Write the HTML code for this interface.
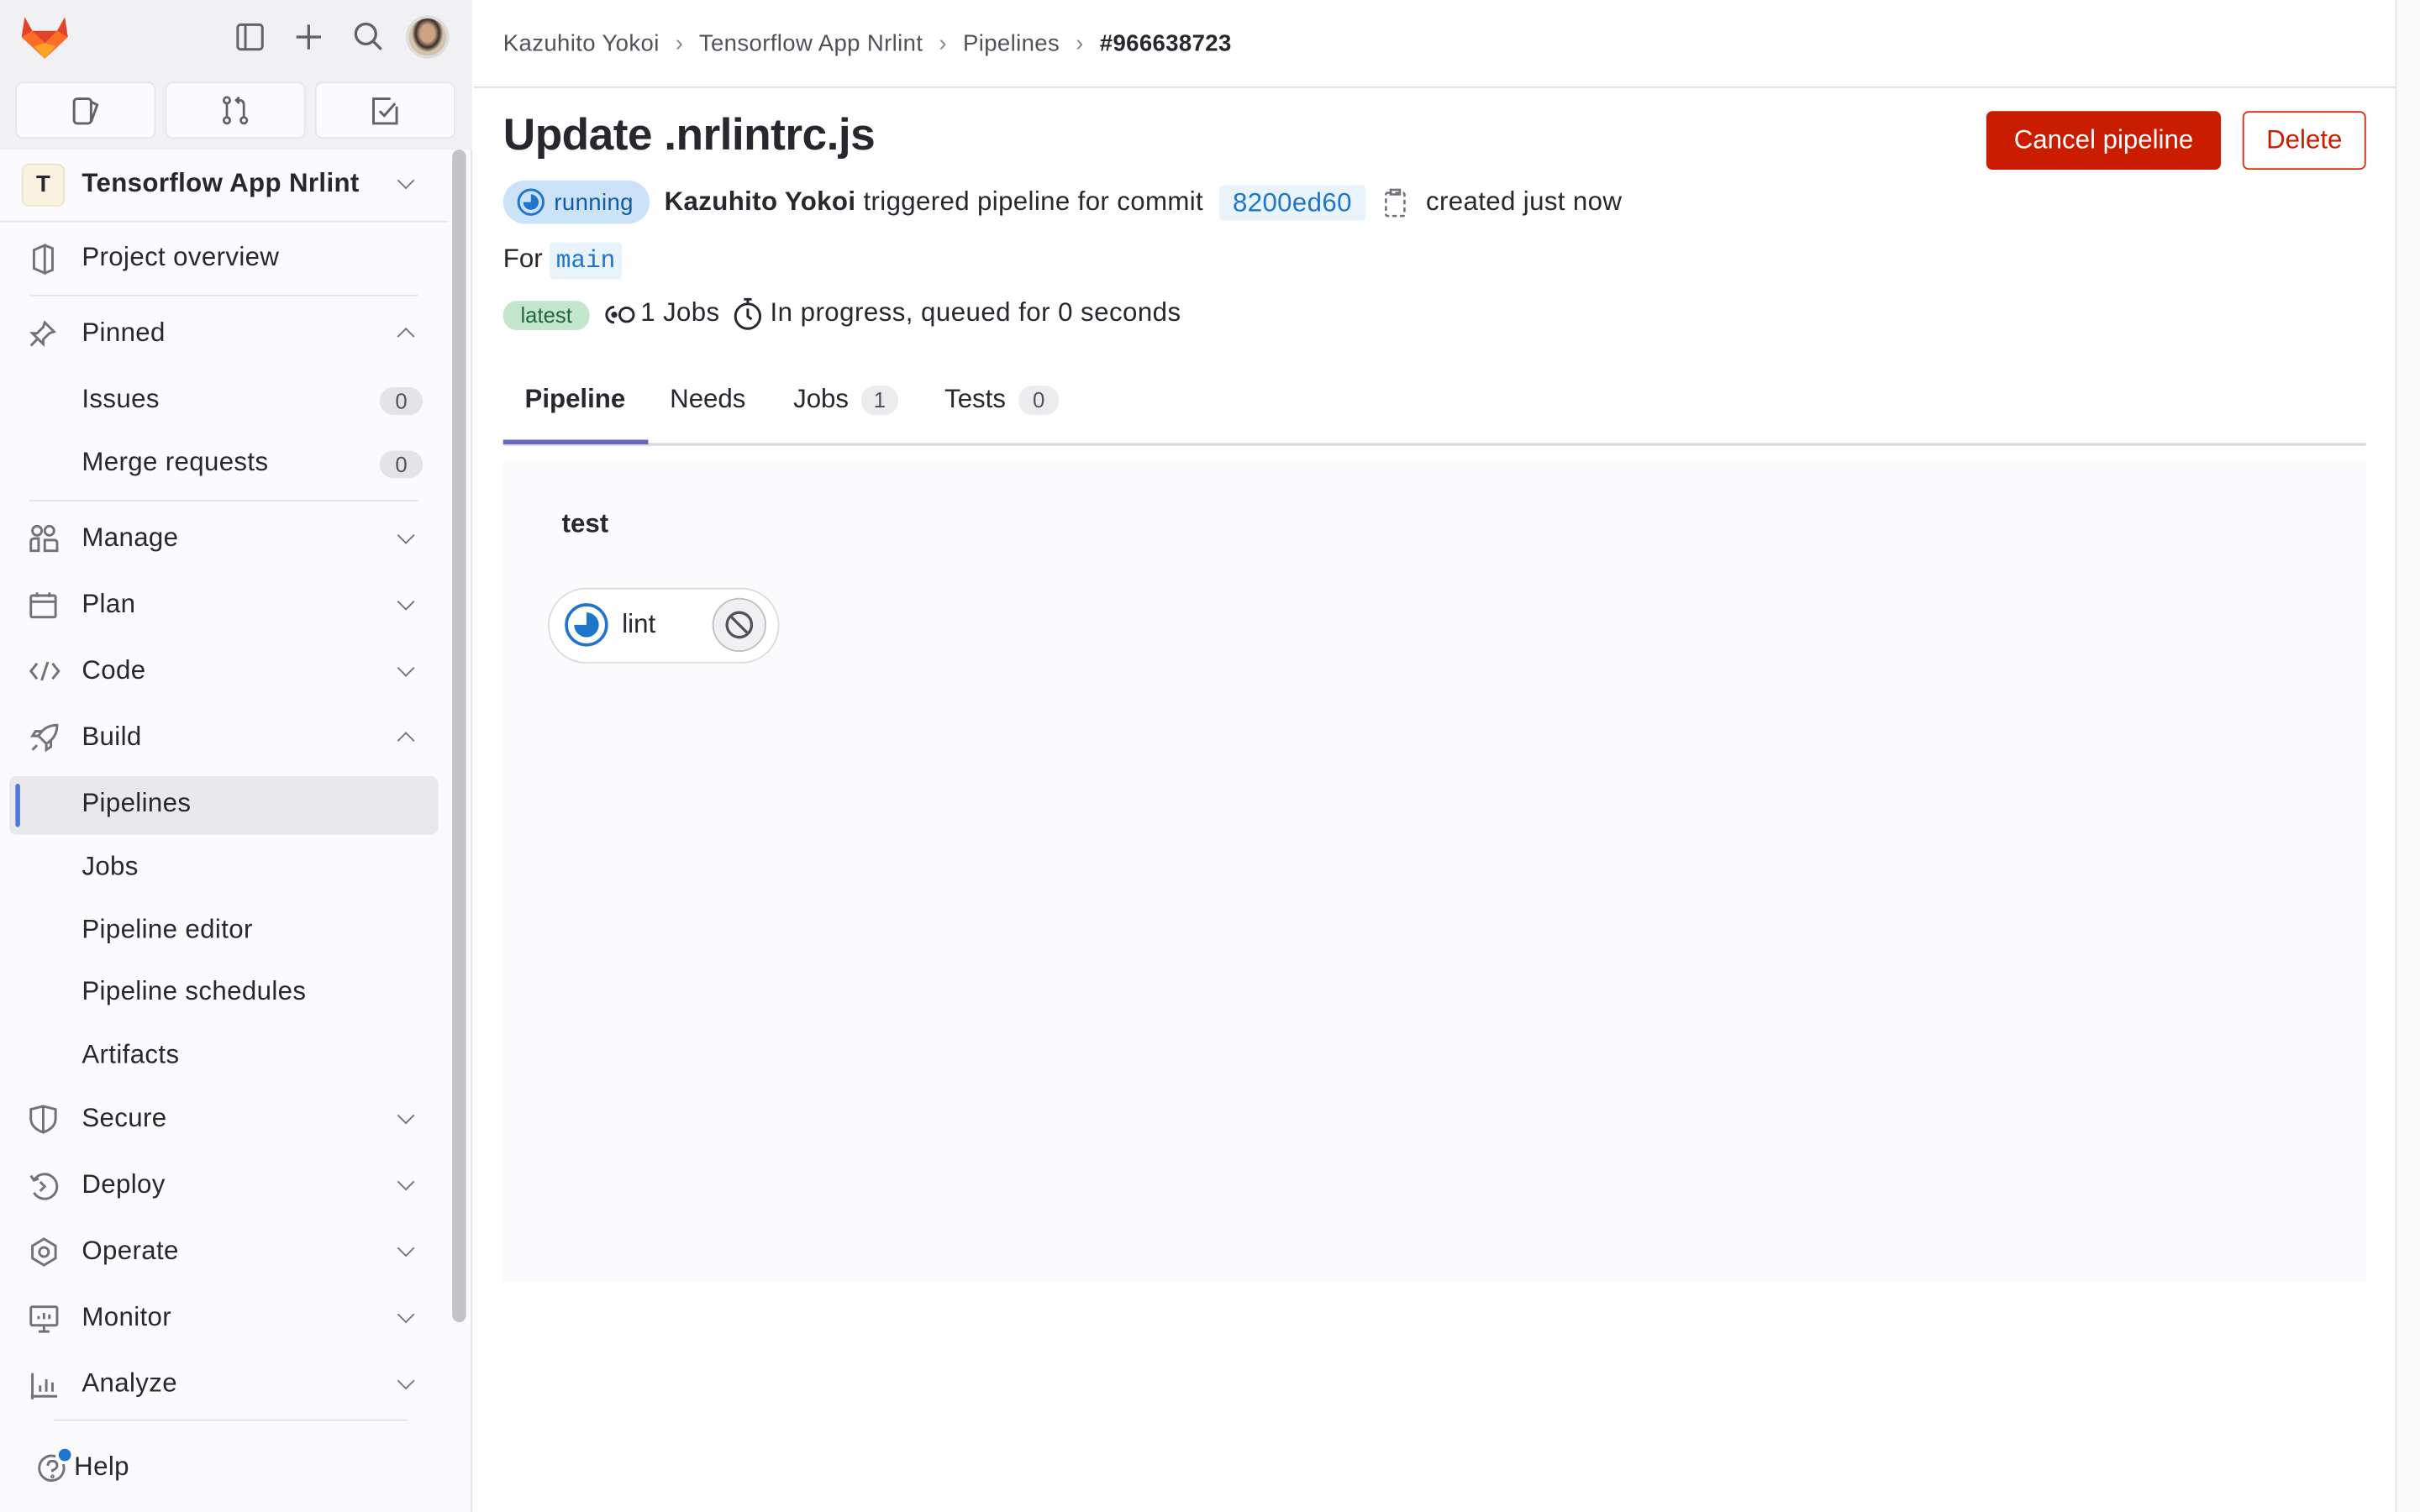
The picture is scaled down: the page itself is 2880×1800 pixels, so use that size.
<!DOCTYPE html>
<html><head><meta charset="utf-8"><style>
*{box-sizing:border-box;margin:0;padding:0}
html,body{width:2880px;height:1800px;overflow:hidden;background:#fff}
#r{position:absolute;left:0;top:0;width:1568px;height:980px;transform:scale(1.836735);transform-origin:0 0;font-family:"Liberation Sans",sans-serif;color:#28272d}
.a{position:absolute;white-space:nowrap}
#sb{position:absolute;left:0;top:0;width:306px;height:980px;background:#fbfafd;border-right:1px solid #e4e4e8}
#top{position:absolute;left:0;top:0;width:306px;height:97px;background:#f1f1f3}
.tb{position:absolute;top:53px;width:91px;height:37px;background:#fbfafd;border:1px solid #e6e6ea;border-radius:5px}
.ni{position:absolute;left:53px;font-size:17px;color:#28272d;letter-spacing:0.2px}
.ic{position:absolute;left:19px}
.chev{position:absolute;left:259px;width:8px;height:8px;border-right:1.6px solid #737278;border-bottom:1.6px solid #737278}
.cd{transform:rotate(45deg)}.cu{transform:rotate(-135deg)}
.cnt{position:absolute;left:246px;width:28px;height:18px;border-radius:9px;background:#e4e4e8;font-size:14px;text-align:center;line-height:18px;color:#535158}
.hr{position:absolute;left:19px;width:252px;height:1px;background:#e4e4e8}
svg{overflow:visible}
.row{position:absolute;display:flex;align-items:center;white-space:nowrap;font-size:17px;letter-spacing:0.2px}
</style></head><body><div id="r">
<div id="sb">
<div id="top"></div>
<svg class="a" style="left:13px;top:10px" width="32" height="30" viewBox="0 0 32 30"><path d="M3 1 L8 10 L24 10 L29 1 L31 14 L16 28 L1 14Z" fill="#e24329"/><path d="M1 14 L8 10 L16 18 L24 10 L31 14 L16 28Z" fill="#fc6d26"/><path d="M9 20 L16 18 L23 20 L16 28Z" fill="#fca326"/></svg>
<svg class="a" style="left:153px;top:15px" width="18" height="18" viewBox="0 0 18 18" fill="none" stroke="#626168" stroke-width="1.6"><rect x="1" y="1" width="16" height="16" rx="2"/><line x1="6" y1="1" x2="6" y2="17"/></svg>
<svg class="a" style="left:191px;top:15px" width="18" height="18" stroke="#626168" stroke-width="1.8"><line x1="9" y1="1" x2="9" y2="17"/><line x1="1" y1="9" x2="17" y2="9"/></svg>
<svg class="a" style="left:229px;top:14px" width="19" height="19" fill="none" stroke="#626168" stroke-width="1.8"><circle cx="8" cy="8" r="6.5"/><line x1="13" y1="13" x2="18" y2="18"/></svg>
<div class="a" style="left:263px;top:10px;width:28px;height:28px;border-radius:50%;background:radial-gradient(ellipse at 50% 40%,#c9a382 0 28%,#3a2f28 45%,#d9c7b0 60%,#bfa88e 100%);border:2px solid #ddd"></div>
<div class="tb" style="left:10px"></div><div class="tb" style="left:107px"></div><div class="tb" style="left:204px"></div>
<svg class="a" style="left:47px;top:63px" width="18" height="18" fill="none" stroke="#626168" stroke-width="1.6"><rect x="1" y="1" width="11" height="16" rx="2"/><path d="M12 3 L16 5 L12 16"/></svg>
<svg class="a" style="left:144px;top:62px" width="18" height="19" fill="none" stroke="#626168" stroke-width="1.5"><circle cx="3" cy="3" r="2"/><circle cx="3" cy="16" r="2"/><circle cx="14" cy="16" r="2"/><line x1="3" y1="5" x2="3" y2="14"/><path d="M14 14 V6 Q14 3 11 3 H9 M11 1 L9 3 L11 5"/></svg>
<svg class="a" style="left:241px;top:63px" width="18" height="18" fill="none" stroke="#626168" stroke-width="1.6"><path d="M16 6 V17 H1 V1 H12"/><path d="M5 9 L8 12 L15 4"/></svg>
<div class="a" style="left:293px;top:97px;width:9px;height:760px;background:#c4c4c8;border-radius:5px"></div>
<div class="a" style="left:14px;top:106px;width:28px;height:28px;border-radius:5px;background:#faf1e1;border:1px solid #efe3cb;font-weight:bold;font-size:15px;text-align:center;line-height:26px">T</div>
<div class="ni" style="top:109px;font-weight:bold">Tensorflow App Nrlint</div><div class="chev cd" style="top:113px"></div>
<div class="a" style="left:0;top:143px;width:290px;height:1px;background:#e4e4e8"></div>
<svg class="ic" style="top:158px" width="18" height="20" fill="none" stroke="#737278" stroke-width="1.6"><path d="M3 4 L10 1 V19 L3 16Z M10 1 L15 3 V17 L10 19"/></svg>
<div class="ni" style="top:157px">Project overview</div>
<div class="hr" style="top:191px"></div>
<svg class="ic" style="top:207px" width="18" height="18" fill="none" stroke="#737278" stroke-width="1.6"><path d="M10 2 L16 8 L13 9 L9 13 L9 16 L2 9 L5 9 L9 5Z M5 13 L1 17"/></svg>
<div class="ni" style="top:206px">Pinned</div><div class="chev cu" style="top:214px"></div>
<div class="ni" style="top:249px">Issues</div><div class="cnt" style="top:251px">0</div>
<div class="ni" style="top:290px">Merge requests</div><div class="cnt" style="top:292px">0</div>
<div class="hr" style="top:324px"></div>
<svg class="ic" style="top:340px" width="19" height="18" fill="none" stroke="#737278" stroke-width="1.6"><circle cx="5" cy="4" r="3"/><circle cx="13" cy="4" r="3"/><path d="M1 17 V11 Q1 9 4 9 H6 V17Z M10 17 V10 H16 Q18 10 18 12 V17Z"/></svg>
<div class="ni" style="top:339px">Manage</div><div class="chev cd" style="top:343px"></div>
<svg class="ic" style="top:383px" width="18" height="18" fill="none" stroke="#737278" stroke-width="1.6"><rect x="1" y="3" width="16" height="14" rx="1"/><line x1="1" y1="7" x2="17" y2="7"/><line x1="5" y1="1" x2="5" y2="4"/><line x1="13" y1="1" x2="13" y2="4"/></svg>
<div class="ni" style="top:382px">Plan</div><div class="chev cd" style="top:386px"></div>
<svg class="ic" style="top:428px" width="20" height="14" fill="none" stroke="#737278" stroke-width="1.6"><path d="M5 2 L1 7 L5 12 M15 2 L19 7 L15 12 M12 1 L8 13"/></svg>
<div class="ni" style="top:425px">Code</div><div class="chev cd" style="top:429px"></div>
<svg class="ic" style="top:469px" width="20" height="19" fill="none" stroke="#737278" stroke-width="1.6"><path d="M18 1 Q10 1 6 8 L11 13 Q18 9 18 1Z M6 8 L2 8 L4 5 L8 5 M11 13 L11 17 L14 15 L14 11 M5 14 L2 17"/></svg>
<div class="ni" style="top:468px">Build</div><div class="chev cu" style="top:476px"></div>
<div class="a" style="left:6px;top:503px;width:278px;height:38px;background:#e9e8ed;border-radius:5px"></div>
<div class="a" style="left:10px;top:508px;width:3px;height:28px;background:#4e79d8;border-radius:2px"></div>
<div class="ni" style="top:511px">Pipelines</div>
<div class="ni" style="top:552px">Jobs</div>
<div class="ni" style="top:593px">Pipeline editor</div>
<div class="ni" style="top:633px">Pipeline schedules</div>
<div class="ni" style="top:674px">Artifacts</div>
<svg class="ic" style="top:716px" width="18" height="19" fill="none" stroke="#737278" stroke-width="1.6"><path d="M9 1 L17 3 V9 Q17 15 9 18 Q1 15 1 9 V3Z M9 1 V18"/></svg>
<div class="ni" style="top:715px">Secure</div><div class="chev cd" style="top:719px"></div>
<svg class="ic" style="top:759px" width="19" height="19" fill="none" stroke="#737278" stroke-width="1.6"><path d="M3 6 A8 8 0 1 1 3 14 M1 3 L3 6 L6 5 M7 7 L10 10 L7 13"/></svg>
<div class="ni" style="top:758px">Deploy</div><div class="chev cd" style="top:762px"></div>
<svg class="ic" style="top:802px" width="19" height="19" fill="none" stroke="#737278" stroke-width="1.6"><path d="M9.5 1 L17 5.5 V13.5 L9.5 18 L2 13.5 V5.5Z"/><circle cx="9.5" cy="9.5" r="3"/></svg>
<div class="ni" style="top:801px">Operate</div><div class="chev cd" style="top:805px"></div>
<svg class="ic" style="top:846px" width="19" height="18" fill="none" stroke="#737278" stroke-width="1.6"><rect x="1" y="1" width="17" height="12" rx="1"/><path d="M6 17 H13 M9.5 13 V17 M6 9 V7 M9.5 9 V5 M13 9 V6"/></svg>
<div class="ni" style="top:844px">Monitor</div><div class="chev cd" style="top:848px"></div>
<svg class="ic" style="top:889px" width="19" height="18" fill="none" stroke="#737278" stroke-width="1.6"><path d="M2 1 V18 M1 16 H18 M7 13 V9 M11 13 V5 M15 13 V7"/></svg>
<div class="ni" style="top:887px">Analyze</div><div class="chev cd" style="top:891px"></div>
<div class="hr" style="top:920px;left:35px;width:230px"></div>
<svg class="a" style="left:24px;top:942px" width="20" height="20" fill="none" stroke="#737278" stroke-width="1.6"><path d="M17 7 A8 8 0 1 1 12 2"/><path d="M7 8 Q7 5 10 5 Q13 5 13 8 Q13 10 10 11 V12"/><circle cx="10" cy="15" r=".5"/></svg>
<div class="a" style="left:38px;top:939px;width:8px;height:8px;border-radius:50%;background:#1f75cb"></div>
<div class="ni" style="left:48px;top:941px">Help</div>
</div>

<div class="a" style="left:307px;top:56px;width:1245px;height:1px;background:#dcdcde"></div>
<div class="a" style="left:1552px;top:0;width:1px;height:980px;background:#e4e4e8"></div>
<div class="a" style="left:1553px;top:0;width:15px;height:980px;background:#fafafa"></div>
<div class="a" style="left:326px;top:20px;font-size:15px;color:#535158;letter-spacing:0.2px">Kazuhito Yokoi <span style="margin:0 6px;color:#888">›</span> Tensorflow App Nrlint <span style="margin:0 6px;color:#888">›</span> Pipelines <span style="margin:0 6px;color:#888">›</span> <b style="color:#28272d">#966638723</b></div>
<div class="a" style="left:326px;top:72px;font-size:29px;font-weight:bold;letter-spacing:-0.3px">Update .nrlintrc.js</div>
<div class="a" style="left:1287px;top:72px;width:152px;height:38px;background:#c91c00;border-radius:4px;color:#fff;font-size:17px;text-align:center;line-height:38px">Cancel pipeline</div>
<div class="a" style="left:1453px;top:72px;width:80px;height:38px;border:1px solid #dd2b0e;border-radius:4px;color:#c91c00;font-size:17px;text-align:center;line-height:36px">Delete</div>
<div class="row" style="left:326px;top:117px;height:28px">
 <div style="height:28px;padding:0 11px 0 9px;border-radius:14px;background:#cbe2f9;display:flex;align-items:center">
 <svg width="18" height="18" fill="none"><circle cx="9" cy="9" r="8" stroke="#1f75cb" stroke-width="1.6"/><path d="M9 4 A5 5 0 1 1 4 9 H9Z" fill="#1f75cb"/></svg>
 <span style="margin-left:6px;font-size:15px;color:#0b5cad">running</span></div>
 <span style="margin-left:9px"><b>Kazuhito Yokoi</b> triggered pipeline for commit</span>
 <span style="margin-left:10px;height:23px;padding:0 9px;background:#e9f3fc;border-radius:3px;color:#1f75cb;line-height:23px">8200ed60</span>
 <svg style="margin-left:12px" width="15" height="19" fill="none" stroke="#737278" stroke-width="1.4" stroke-dasharray="3 2"><rect x="1" y="3" width="12" height="15" rx="1"/><rect x="4" y="1" width="6" height="3" stroke-dasharray="none"/></svg>
 <span style="margin-left:12px">created just now</span>
</div>
<div class="a" style="left:326px;top:158px;font-size:17px">For</div>
<div class="a" style="left:356px;top:157px;width:47px;height:24px;background:#e9f3fc;border-radius:3px;color:#1f75cb;font-family:'Liberation Mono',monospace;font-size:16px;text-align:center;line-height:24px">main</div>
<div class="a" style="left:326px;top:195px;width:56px;height:19px;background:#c3e6cd;border-radius:9px;color:#24663b;font-size:14px;text-align:center;line-height:19px">latest</div>
<svg class="a" style="left:391px;top:197px" width="21" height="14" fill="none" stroke="#28272d" stroke-width="1.6"><path d="M7 2 A5 5 0 1 0 7 12"/><circle cx="15" cy="7" r="4.5"/><circle cx="7" cy="7" r="1.2" fill="#28272d"/></svg>
<div class="a" style="left:415px;top:193px;font-size:17px;letter-spacing:0.2px">1 Jobs</div>
<svg class="a" style="left:475px;top:193px" width="19" height="21" fill="none" stroke="#28272d" stroke-width="1.6"><circle cx="9.5" cy="12" r="8"/><path d="M7 1 H12 M9.5 1 V4 M9.5 7 V12 L12 14"/></svg>
<div class="a" style="left:499px;top:193px;font-size:17px;letter-spacing:0.25px">In progress, queued for 0 seconds</div>
<div class="a" style="left:340px;top:249px;font-size:17px;font-weight:bold">Pipeline</div>
<div class="a" style="left:434px;top:249px;font-size:17px">Needs</div>
<div class="a" style="left:514px;top:249px;font-size:17px">Jobs</div>
<div class="a" style="left:558px;top:250px;width:24px;height:19px;background:#ececef;border-radius:9px;font-size:14px;text-align:center;line-height:19px;color:#535158">1</div>
<div class="a" style="left:612px;top:249px;font-size:17px">Tests</div>
<div class="a" style="left:660px;top:250px;width:26px;height:19px;background:#ececef;border-radius:9px;font-size:14px;text-align:center;line-height:19px;color:#535158">0</div>
<div class="a" style="left:326px;top:287px;width:1207px;height:2px;background:#dcdcde"></div>
<div class="a" style="left:326px;top:285px;width:94px;height:3px;background:#6666c4"></div>
<div class="a" style="left:326px;top:298px;width:1207px;height:533px;background:#fbfafd"></div>
<div class="a" style="left:364px;top:330px;font-size:17px;font-weight:bold">test</div>
<div class="a" style="left:355px;top:381px;width:150px;height:49px;border:1px solid #dcdcde;border-radius:25px;background:#fff"></div>
<svg class="a" style="left:365px;top:390px" width="30" height="30" fill="none"><circle cx="15" cy="15" r="13" stroke="#1f75cb" stroke-width="2"/><path d="M15 7 A8 8 0 1 1 7 15 H15Z" fill="#1f75cb"/></svg>
<div class="a" style="left:403px;top:395px;font-size:17px">lint</div>
<svg class="a" style="left:461px;top:387px" width="36" height="36" fill="none"><circle cx="18" cy="18" r="17" fill="#f0f0f2" stroke="#bfbfc3"/><circle cx="18" cy="18" r="8" stroke="#535158" stroke-width="1.8"/><line x1="12.5" y1="12.5" x2="23.5" y2="23.5" stroke="#535158" stroke-width="1.8"/></svg>
</div></body></html>
